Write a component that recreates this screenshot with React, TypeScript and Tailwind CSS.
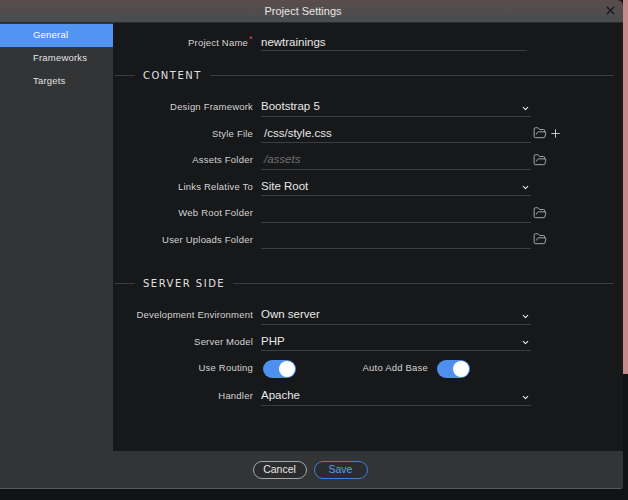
import { ChevronDown, FolderOpen, Plus, X } from 'lucide-react';

const labelClass = "w-[140px] shrink-0 whitespace-nowrap text-right text-[9.5px] tracking-[0.2px] text-[#d4d4d4]";

const Row = ({ label, value, select, muted, icons, plus }: { label: string; value?: string; select?: boolean; muted?: boolean; icons?: boolean; plus?: boolean }) => (
    <div className="flex h-[26.5px] items-center">
        <div className={labelClass}>{label}</div>
        <div className={`relative ml-[8px] flex h-[19px] w-[270px] items-center border-b border-[#3c3d3f] text-[11.5px] ${muted ? 'pl-[3px] italic text-[#6f7072]' : select ? 'text-[#e8e8e8]' : 'pl-[3px] text-[#e8e8e8]'}`}>
            {value}
            {select && <ChevronDown size={9} strokeWidth={3} className="absolute right-[1px] top-[6px] text-[#e8e8e8]" />}
        </div>
        {icons && <FolderOpen size={14} strokeWidth={1.4} className="mb-[1px] ml-[2px] text-[#c4c4c4]" />}
        {plus && <Plus size={13} strokeWidth={1.6} className="mb-[1px] ml-[2px] text-[#e2e2e2]" />}
    </div>
);

const Section = ({ title }: { title: string }) => (
    <div className="flex h-[16px] items-center pl-[2px] pr-[9px]">
        <div className="h-px w-[20px] bg-[#3c3d3f]" />
        <div className="mx-[8px] text-[10px] tracking-[1.5px] text-[#e0e0e0] font-['DejaVu_Sans',sans-serif]">{title}</div>
        <div className="h-px flex-1 bg-[#3c3d3f]" />
    </div>
);

const Toggle = () => (
    <div className="flex h-[18px] w-[33px] items-center justify-end rounded-full bg-[#4f8ff0] pr-px">
        <div className="size-[16px] rounded-full bg-white" />
    </div>
);

const App = () => {
    return (
        <div className="flex h-[500px] w-[628px] bg-[#111214] font-['Liberation_Sans',sans-serif]">
            <div className="flex h-[489px] w-[623px] flex-col overflow-hidden rounded-br-[3px] rounded-tr-[6px] border-b border-[#58595b] bg-[#323436]">
                <header className="relative flex h-[23px] shrink-0 items-center justify-center border-b border-[#2b2c2e] bg-gradient-to-b from-[#5b4c4c] to-[#484c4f] pr-[17px] text-[11px] text-[#e6e6e6]">
                    Project Settings
                    <X size={13} strokeWidth={2.5} className="absolute right-[6px] top-[4px] text-[#17181a]" />
                </header>

                <div className="flex min-h-0 flex-1">
                    <nav className="w-[113px] shrink-0 pt-px text-[9.5px] tracking-[0.2px] text-[#e2e2e2]">
                        <div className="flex h-[23px] items-center bg-[#5294f2] pl-[33px] text-white">General</div>
                        <div className="flex h-[23px] items-center pl-[33px]">Frameworks</div>
                        <div className="flex h-[23px] items-center pl-[33px]">Targets</div>
                    </nav>

                    <main className="flex-1 bg-[#17181a] pt-[9px]">
                        <div className="flex h-[19px] items-center pt-[3px]">
                            <div className={labelClass + ' !w-[135px]'}>Project Name</div>
                            <span className="mb-[6px] ml-px w-[7px] text-[9px] text-[#e0474c]">*</span>
                            <div className="ml-[5px] flex h-[16px] w-[266px] items-center border-b border-[#3c3d3f] text-[11.5px] text-[#e8e8e8]">newtrainings</div>
                        </div>

                        <div className="mt-[16px]"><Section title="CONTENT" /></div>

                        <div className="mt-[11px]">
                            <Row label="Design Framework" value="Bootstrap 5" select />
                            <Row label="Style File" value="/css/style.css" icons plus />
                            <Row label="Assets Folder" value="/assets" muted icons />
                            <Row label="Links Relative To" value="Site Root" select />
                            <Row label="Web Root Folder" icons />
                            <Row label="User Uploads Folder" icons />
                        </div>

                        <div className="mt-[22px]"><Section title="SERVER SIDE" /></div>

                        <div className="mt-[11px]">
                            <Row label="Development Environment" value="Own server" select />
                            <Row label="Server Model" value="PHP" select />
                            <div className="flex h-[27px] items-center">
                                <div className={labelClass}>Use Routing</div>
                                <div className="ml-[10px]"><Toggle /></div>
                                <div className="w-[132px] shrink-0 text-right text-[9.5px] tracking-[0.2px] text-[#d4d4d4]">Auto Add Base</div>
                                <div className="ml-[9px]"><Toggle /></div>
                            </div>
                            <div className="mt-[1px]"><Row label="Handler" value="Apache" select /></div>
                        </div>
                    </main>
                </div>

                <footer className="flex h-[37px] shrink-0 items-center justify-center gap-[7px] pr-[3px] text-[10.5px]">
                    <button className="h-[18px] w-[54px] rounded-full border border-[#a5a6a8] bg-[#2b2c2e] text-[#e6e6e6]">Cancel</button>
                    <button className="h-[18px] w-[54px] rounded-full border border-[#3f7fd8] bg-[#2b2c2e] text-[#5b9cf5]">Save</button>
                </footer>
            </div>
            <div className="h-[374px] w-[5px] bg-[#c98a8c]" />
        </div>
    );
};

export default App;
